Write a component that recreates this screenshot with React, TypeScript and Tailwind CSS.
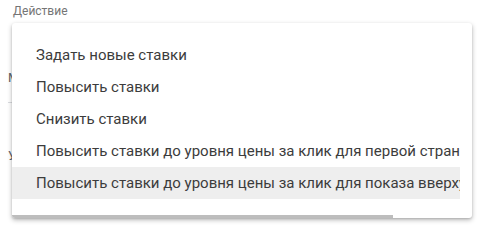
const actions = [
  "Задать новые ставки",
  "Повысить ставки",
  "Снизить ставки",
  "Повысить ставки до уровня цены за клик для первой страницы",
  "Повысить ставки до уровня цены за клик для показа вверху страницы",
];

export default function App() {
  const activeIndex = 4;

  return (
    <div className="relative h-[232px] w-[484px] overflow-hidden bg-white font-['Roboto',sans-serif]">
      {/* form behind the open menu */}
      <div className="flex flex-col">
        <label className="pl-[13px] pt-[3px] text-[12px] leading-[16px] text-[#757575]">
          Действие
        </label>
        <div className="h-[52px]" />
        <div className="pl-[8px] text-[13px] leading-[14px] text-[#5f6368]">Максимальная ставка</div>
        <div className="mt-[17px] ml-[8px] h-px w-[200px] bg-[#dadce0]" />
        <div className="mt-[46px] pl-[8px] text-[13px] leading-[14px] text-[#5f6368]">Условия</div>
        <div className="mt-[34px] pl-[26px] text-[14px] font-medium leading-[16px] text-[#1a73e8]">
          Добавить
        </div>
      </div>

      {/* dropdown menu */}
      <div className="absolute left-[12px] top-[23px] flex h-[195px] w-[460px] flex-col overflow-hidden rounded-[3px] bg-white shadow-[0_2px_5px_rgba(0,0,0,0.28),0_1px_2px_rgba(0,0,0,0.12)]">
        <ul className="w-[448px] overflow-hidden py-4">
          {actions.map((action, i) => (
            <li
              key={action}
              className={`h-8 whitespace-nowrap px-6 text-[15px] leading-8 text-[#3c3c3c] ${
                i === activeIndex ? "bg-[#eeeeee]" : ""
              }`}
            >
              {action}
            </li>
          ))}
        </ul>
        <div className="h-[3px] w-[448px]">
          <div className="h-full w-[381px] bg-[#bdbdbd]" />
        </div>
      </div>
    </div>
  );
}
